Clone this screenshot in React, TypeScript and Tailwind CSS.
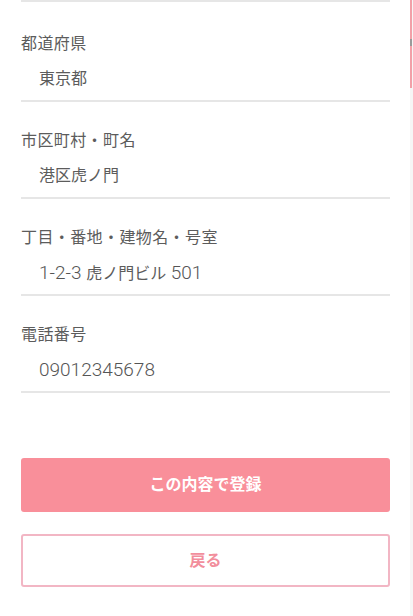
import React from "react";

type Part = { t: string; latin?: boolean };

const fields: { label: string; value: Part[] }[] = [
  { label: "都道府県", value: [{ t: "東京都" }] },
  { label: "市区町村・町名", value: [{ t: "港区虎ノ門" }] },
  {
    label: "丁目・番地・建物名・号室",
    value: [{ t: "1-2-3 ", latin: true }, { t: "虎ノ門ビル" }, { t: " 501", latin: true }],
  },
  { label: "電話番号", value: [{ t: "09012345678", latin: true }] },
];

export default function App() {
  return (
    <div
      className="relative flex h-[616px] w-[413px] overflow-hidden bg-white"
      style={{ fontFamily: "Roboto, 'Noto Sans CJK JP', sans-serif" }}
    >
      <div className="flex flex-1 flex-col pl-[21px] pr-[20px]">
        <div className="h-[2px] bg-[#e6e6e6]" />
        {fields.map((f, i) => (
          <div
            key={f.label}
            className={`flex flex-col border-b-2 border-[#e6e6e6] pb-[9px] ${
              i === 0 ? "pt-[30px]" : "pt-[27px]"
            }`}
          >
            <div className="text-[16px] leading-[24px] tracking-[0.4px] text-[#5c5c5c]">{f.label}</div>
            <div className="mt-[11px] h-[24px] pl-[18px] text-[16px] leading-[24px] text-[#5c5c5c]">
              {f.value.map((p, j) =>
                p.latin ? (
                  <span key={j} className="whitespace-pre text-[19px] font-light text-[#555]">
                    {p.t}
                  </span>
                ) : (
                  <span key={j}>{p.t}</span>
                )
              )}
            </div>
          </div>
        ))}
        <button className="mt-[65px] flex h-[54px] items-center justify-center rounded-[3px] bg-[#f98f9a] text-[16px] font-bold text-white">
          この内容で登録
        </button>
        <button className="mt-[22px] flex h-[53px] items-center justify-center rounded-[3px] border-2 border-[#f2b6c4] bg-white text-[16px] font-bold text-[#f28e9c]">
          戻る
        </button>
      </div>
      <div className="relative w-[3px] bg-[#f6f6f6]">
        <div className="absolute left-0 top-0 h-[88px] w-[2px] bg-[#f2a0a8]" />
        <div className="absolute left-0 top-[39px] h-[7px] w-[2px] bg-[#9a9a9a]" />
      </div>
    </div>
  );
}
